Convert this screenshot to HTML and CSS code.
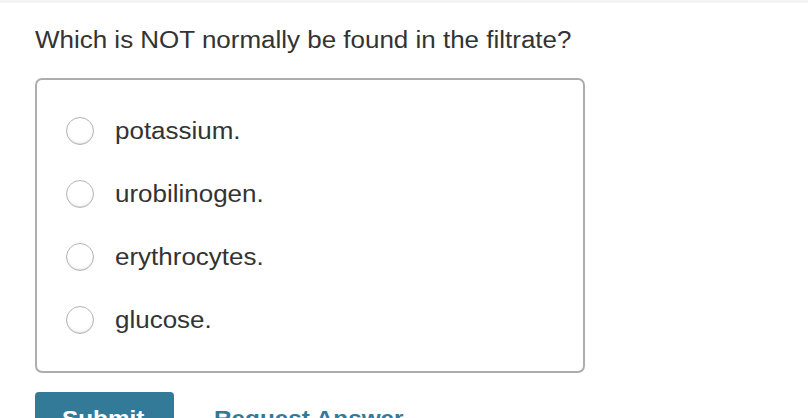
FILE: index.html
```html
<!DOCTYPE html>
<html>
<head>
<meta charset="utf-8">
<link rel="stylesheet" href="styles.css">
</head>
<body>
<div class="topbar"></div>
<main class="content">
  <h1 class="question"><span class="wide">Which is NOT normally be found in the filtrate?</span></h1>
  <div class="choices">
    <label class="choice"><span class="radio"></span><span class="label wide">potassium.</span></label>
    <label class="choice"><span class="radio"></span><span class="label wide">urobilinogen.</span></label>
    <label class="choice"><span class="radio"></span><span class="label wide">erythrocytes.</span></label>
    <label class="choice"><span class="radio"></span><span class="label wide">glucose.</span></label>
  </div>
  <div class="actions">
    <button class="submit"><span class="wide">Submit</span></button>
    <a class="request" href="#"><span class="wide">Request Answer</span></a>
  </div>
</main>
</body>
</html>
```
FILE: styles.css
```css
html, body {
  margin: 0;
  padding: 0;
  background: #ffffff;
  font-family: "Liberation Sans", Arial, Helvetica, sans-serif;
  color: #333333;
  overflow: hidden;
}
.wide {
  display: inline-block;
  transform: scaleX(1.105);
  transform-origin: left center;
  white-space: nowrap;
}
.topbar {
  height: 3px;
  background: #f4f4f4;
}
.content {
  padding: 0 0 0 35px;
}
.question {
  margin: 23px 0 0 0;
  font-size: 23.5px;
  line-height: 28px;
  font-weight: normal;
  color: #333333;
}
.choices {
  box-sizing: border-box;
  margin-top: 24px;
  width: 550px;
  height: 295px;
  border: 2px solid #adadad;
  border-radius: 7px;
  padding: 20px 0 20px 29px;
  display: flex;
  flex-direction: column;
}
.choice {
  height: 63px;
  display: flex;
  align-items: center;
  gap: 21px;
}
.radio {
  width: 26px;
  height: 26px;
  border-radius: 50%;
  border: 1px solid #b4b4b4;
  background: radial-gradient(circle at 50% 40%, #ffffff 55%, #f3f3f3 80%, #e4e4e4 100%);
  box-shadow: inset 0 -1px 1px rgba(0,0,0,0.08);
  flex: none;
}
.label {
  font-size: 23.5px;
  line-height: 28px;
  color: #333333;
}
.actions {
  margin-top: 19px;
  display: flex;
  align-items: flex-start;
  gap: 40px;
}
.submit {
  width: 139px;
  height: 46px;
  border: none;
  border-radius: 4px;
  background: #337a99;
  color: #ffffff;
  font-family: "Liberation Sans", Arial, sans-serif;
  font-size: 22px;
  font-weight: bold;
  padding: 4px 0 0 27px;
  text-align: left;
  line-height: 46px;
}
.request {
  color: #337a99;
  font-size: 22px;
  font-weight: bold;
  text-decoration: none;
  line-height: 46px;
  padding-top: 4px;
}
```
